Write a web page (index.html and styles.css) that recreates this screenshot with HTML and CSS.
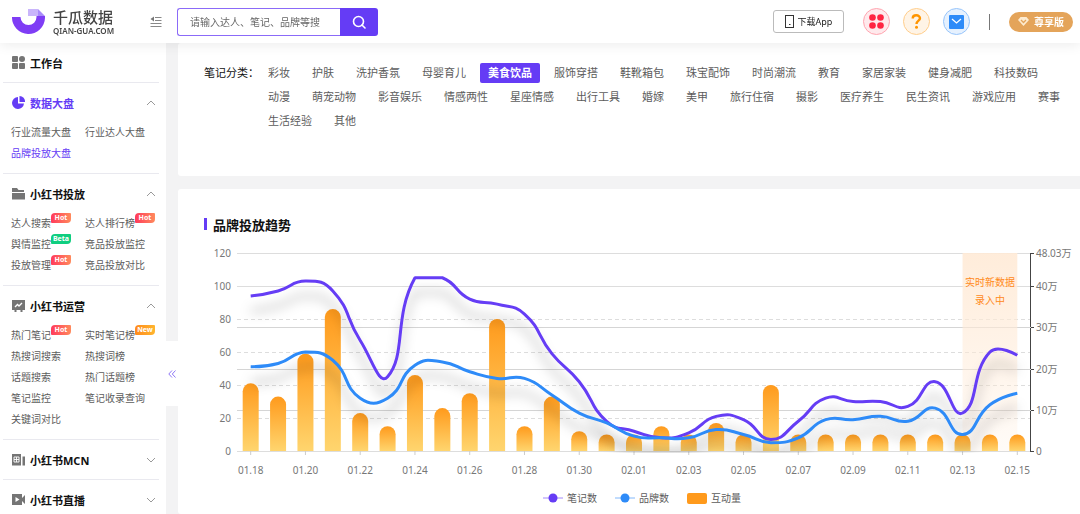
FILE: index.html
```html
<!DOCTYPE html>
<html lang="zh-CN">
<head>
    <meta charset="UTF-8">
    <meta name="viewport" content="width=device-width, initial-scale=1.0">
    <title>千瓜数据</title>
    <link rel="stylesheet" href="styles.css">
</head>
<body>
    <header class="topbar">
        <a class="logo" href="#">
            <svg width="33" height="26" viewBox="0 0 33 26">
                <path fill="#7f3df5" d="M0 8h8.500a8 8 0 0 0 16 0V7H33v2a16.500 16.500 0 0 1-33-1z"/>
                <path fill="#c9b5fb" d="M16 0h10v7H16z"/>
                <path fill="#a98bfa" d="M26 0l7 7h-7z"/>
            </svg>
            <span class="logo-text">
                <span class="logo-name">千瓜数据</span>
                <span class="logo-domain">QIAN-GUA.COM</span>
            </span>
        </a>
        <button class="fold-button" aria-label="收起菜单">
            <svg width="12" height="12" viewBox="0 0 12 12" fill="none" stroke="#888">
                <path d="M5 1.500h6.500M5 4.500h6.500M.5 7.500h11M.5 10.500h11"/>
                <path d="M4 .5v5L.5 3z" fill="#777" stroke="none"/>
            </svg>
        </button>
        <form class="search">
            <input type="text" placeholder="请输入达人、笔记、品牌等搜" aria-label="搜索">
            <button type="button" aria-label="搜索">
                <svg width="14" height="14" viewBox="0 0 14 14" fill="none" stroke="#fff" stroke-width="1.600">
                    <circle cx="6.500" cy="6.500" r="5"/>
                    <path d="M10 10l3 3" stroke-linecap="round"/>
                </svg>
            </button>
        </form>
        <div class="tools">
            <button class="app-button">
                <svg width="9" height="13" viewBox="0 0 9 13" fill="none" stroke="#333">
                    <rect x=".5" y=".5" width="8" height="12"/>
                    <path d="M4 9.500h1.500"/>
                </svg>
                下载App
            </button>
            <button class="round-button red" aria-label="应用">
                <svg width="15" height="15" viewBox="0 0 15 15" fill="#ff2442">
                    <circle cx="3.500" cy="3.500" r="3.300"/>
                    <circle cx="11.500" cy="3.500" r="3.300"/>
                    <circle cx="3.500" cy="11.500" r="3.300"/>
                    <circle cx="11.500" cy="11.500" r="3.300"/>
                </svg>
            </button>
            <button class="round-button orange" aria-label="帮助">
                <svg width="11" height="15" viewBox="0 0 11 15" fill="none" stroke="#ff9500" stroke-width="2.400">
                    <path d="M1.700 4.500C1.700 2.500 3.300 1.300 5.300 1.300S9 2.500 9 4.300C9 6.700 5.500 6.600 5.500 10"/>
                    <circle cx="5.500" cy="13.300" r="1.500" fill="#ff9500" stroke="none"/>
                </svg>
            </button>
            <button class="round-button blue" aria-label="消息">
                <svg width="15" height="14" viewBox="0 0 15 14">
                    <rect width="15" height="14" rx="1" fill="#2e8bf8"/>
                    <path d="M3 4l4.500 4L12 4" fill="none" stroke="#fff" stroke-width="1.300"/>
                </svg>
            </button>
            <span class="separator"></span>
            <button class="vip-button">
                <svg width="11" height="9" viewBox="0 0 11 9">
                    <path d="M2.500 0h6L11 3 5.500 9 0 3z" fill="#fdebd0"/>
                    <path d="M3 3l2.500 2.500L8 3" fill="none" stroke="#e4a45a" stroke-width="1.300"/>
                </svg>
                尊享版
            </button>
        </div>
    </header>

    <div class="page">
        <nav class="sidebar">
            <section>
                <button class="menu-title">
                    <svg width="13" height="13" viewBox="0 0 13 13" fill="#757575">
                        <rect y="0" width="6" height="6" rx="1"/>
                        <circle cx="10" cy="3" r="3"/>
                        <rect y="7" width="6" height="6" rx="1"/>
                        <rect x="7" y="7" width="6" height="6" rx="1"/>
                    </svg>
                    工作台
                </button>
            </section>
            <section>
                <button class="menu-title active">
                    <svg width="13" height="13" viewBox="0 0 13 13" fill="#653cf5">
                        <path d="M6 1v6.500h6A6 6 0 1 1 6 1z"/>
                        <path d="M7.500 0A5.500 5.500 0 0 1 13 6H7.500z"/>
                    </svg>
                    数据大盘
                    <svg class="arrow" width="10" height="6" viewBox="0 0 10 6"><path d="M1 5l4-4 4 4"/></svg>
                </button>
                <div class="menu-links">
                    <a href="#">行业流量大盘</a>
                    <a href="#">行业达人大盘</a>
                    <a href="#" class="active">品牌投放大盘</a>
                </div>
            </section>
            <section>
                <button class="menu-title">
                    <svg width="13" height="13" viewBox="0 0 13 13" fill="#757575">
                        <path d="M0 1h5l1.500 2H12v2H0zM0 6h13v6.500H0z"/>
                    </svg>
                    小红书投放
                    <svg class="arrow" width="10" height="6" viewBox="0 0 10 6"><path d="M1 5l4-4 4 4"/></svg>
                </button>
                <div class="menu-links">
                    <a href="#">达人搜索<span class="badge">Hot</span></a>
                    <a href="#">达人排行榜<span class="badge">Hot</span></a>
                    <a href="#">舆情监控<span class="badge beta">Beta</span></a>
                    <a href="#">竞品投放监控</a>
                    <a href="#">投放管理<span class="badge">Hot</span></a>
                    <a href="#">竞品投放对比</a>
                </div>
            </section>
            <section>
                <button class="menu-title">
                    <svg width="13" height="13" viewBox="0 0 13 13" fill="#757575">
                        <path d="M0 1h13v10H0zM2.500 11h2v2h-2zM8.500 11h2v2h-2z"/>
                        <path d="M3 8l2.500-2.500L7 7l3-3" fill="none" stroke="#fff" stroke-width="1.300"/>
                    </svg>
                    小红书运营
                    <svg class="arrow" width="10" height="6" viewBox="0 0 10 6"><path d="M1 5l4-4 4 4"/></svg>
                </button>
                <div class="menu-links">
                    <a href="#">热门笔记<span class="badge">Hot</span></a>
                    <a href="#">实时笔记榜<span class="badge new">New</span></a>
                    <a href="#">热搜词搜索</a>
                    <a href="#">热搜词榜</a>
                    <a href="#">话题搜索</a>
                    <a href="#">热门话题榜</a>
                    <a href="#">笔记监控</a>
                    <a href="#">笔记收录查询</a>
                    <a href="#">关键词对比</a>
                </div>
            </section>
            <section>
                <button class="menu-title">
                    <svg width="13" height="13" viewBox="0 0 13 13" fill="#757575">
                        <path d="M0 1h9v11.500H0zM10.500 3.500H13v9h-2.500z"/>
                        <path d="M2 4h5v5H2zM2 6.500h5M4.500 4v5" stroke="#fff" fill="none" stroke-width=".9"/>
                    </svg>
                    小红书MCN
                    <svg class="arrow" width="10" height="6" viewBox="0 0 10 6"><path d="M1 1l4 4 4-4"/></svg>
                </button>
            </section>
            <section>
                <button class="menu-title">
                    <svg width="13" height="13" viewBox="0 0 13 13" fill="#757575">
                        <path d="M0 1h10v11H0zM10 5l3-3v9l-3-3z"/>
                        <path d="M3.500 4l4 2.500-4 2.500z" fill="#fff"/>
                    </svg>
                    小红书直播
                    <svg class="arrow" width="10" height="6" viewBox="0 0 10 6"><path d="M1 1l4 4 4-4"/></svg>
                </button>
            </section>
        </nav>

        <main class="content">
            <button class="collapse-tab" aria-label="收起侧栏">
                <svg width="8" height="8" viewBox="0 0 8 8" fill="none" stroke="#8f78f5"><path d="M4 .5L.8 4 4 7.500M7.500 .5L4.300 4l3.200 3.500"/></svg>
            </button>
            <div class="card filter">
                <span class="filter-label">笔记分类：</span>
                <div class="filter-options">
                    <button>彩妆</button>
                    <button>护肤</button>
                    <button>洗护香氛</button>
                    <button>母婴育儿</button>
                    <button class="selected">美食饮品</button>
                    <button>服饰穿搭</button>
                    <button>鞋靴箱包</button>
                    <button>珠宝配饰</button>
                    <button>时尚潮流</button>
                    <button>教育</button>
                    <button>家居家装</button>
                    <button>健身减肥</button>
                    <button>科技数码</button>
                    <button>动漫</button>
                    <button>萌宠动物</button>
                    <button>影音娱乐</button>
                    <button>情感两性</button>
                    <button>星座情感</button>
                    <button>出行工具</button>
                    <button>婚嫁</button>
                    <button>美甲</button>
                    <button>旅行住宿</button>
                    <button>摄影</button>
                    <button>医疗养生</button>
                    <button>民生资讯</button>
                    <button>游戏应用</button>
                    <button>赛事</button>
                    <button>生活经验</button>
                    <button>其他</button>
                </div>
            </div>
            <div class="card trend">
                <h2>品牌投放趋势</h2>
                <svg id="trendChart" class="chart"></svg>
                <ul class="legend">
                    <li><svg width="20" height="10"><path d="M0 5h20" stroke="#653cf5" stroke-opacity=".6"/><circle cx="10" cy="5" r="4.500" fill="#653cf5"/></svg>笔记数</li>
                    <li><svg width="20" height="10"><path d="M0 5h20" stroke="#2e8bf8" stroke-opacity=".6"/><circle cx="10" cy="5" r="4.500" fill="#2e8bf8"/></svg>品牌数</li>
                    <li><svg width="20" height="11"><rect width="20" height="11" rx="2" fill="#ff9a1c"/></svg>互动量</li>
                </ul>
            </div>
        </main>
    </div>
    <script src="chart.js"></script>
</body>
</html>
```
FILE: styles.css
```css
:root {
    --purple: #653cf5;
    --line: #e9e9ef;
}
* {
    box-sizing: border-box;
}
body {
    margin: 0;
    height: 100vh;
    display: flex;
    flex-direction: column;
    overflow: hidden;
    font-family: "Noto Sans", "Noto Sans CJK SC", sans-serif;
    font-size: 10px;
    color: #5c5c5c;
    background-color: #f3f3f4;
}
button {
    padding: 0;
    border: none;
    background: none;
    font: inherit;
    color: inherit;
    cursor: pointer;
}
a {
    color: inherit;
    text-decoration: none;
}
svg {
    flex-shrink: 0;
}

/* top bar */
.topbar {
    position: relative;
    z-index: 2;
    height: 43px;
    flex-shrink: 0;
    display: flex;
    align-items: center;
    padding: 0 7px 0 12px;
    background-color: #fff;
    box-shadow: 0 2px 12px rgba(0, 0, 0, 0.08);
}
.logo {
    display: flex;
    align-items: center;
    gap: 8px;
    width: 138px;
    color: #444;
}
.logo-text {
    display: flex;
    flex-direction: column;
}
.logo-name {
    font-size: 15px;
    font-weight: 500;
    line-height: 17px;
}
.logo-domain {
    font-size: 8px;
    font-weight: 600;
    line-height: 9px;
}
.fold-button {
    display: flex;
}
.search {
    display: flex;
    width: 201px;
    height: 28px;
    margin-left: 15px;
}
.search input {
    flex: 1;
    min-width: 0;
    padding: 0 12px;
    border: 1px solid #8b6af8;
    border-right: none;
    border-radius: 3px 0 0 3px;
    font: inherit;
    outline: none;
}
.search input::placeholder {
    color: #666;
}
.search button {
    width: 38px;
    display: flex;
    align-items: center;
    justify-content: center;
    border-radius: 0 3px 3px 0;
    background-color: var(--purple);
}
.tools {
    display: flex;
    align-items: center;
    gap: 13px;
    margin-left: auto;
}
.app-button {
    display: flex;
    align-items: center;
    justify-content: center;
    gap: 4px;
    width: 71px;
    height: 23px;
    margin-right: 6px;
    border: 1px solid #bbb;
    border-radius: 3px;
    font-size: 9px;
    color: #222;
}
.round-button {
    width: 27px;
    height: 27px;
    display: flex;
    align-items: center;
    justify-content: center;
    border: 1px solid;
    border-radius: 50%;
}
.round-button.red {
    background-color: #ffe9ec;
    border-color: #ffa5b0;
}
.round-button.orange {
    background-color: #fff4e6;
    border-color: #ffce8c;
}
.round-button.blue {
    background-color: #e6f1fe;
    border-color: #97c5fb;
}
.separator {
    width: 1px;
    height: 16px;
    margin: 0 6px;
    background-color: #777;
}
.vip-button {
    display: flex;
    align-items: center;
    justify-content: center;
    gap: 5px;
    width: 64px;
    height: 20px;
    border-radius: 10px;
    background-color: #e4a45a;
    font-weight: 700;
    color: #fff;
}

.page {
    flex: 1;
    min-height: 0;
    display: flex;
}

/* left menu */
.sidebar {
    width: 166px;
    flex-shrink: 0;
    overflow-y: auto;
    scrollbar-width: none;
    padding: 0 7px 0 3px;
    background-color: #fff;
}
.sidebar section {
    border-bottom: 1px solid var(--line);
}
.menu-title {
    width: 100%;
    height: 39px;
    display: flex;
    align-items: center;
    gap: 5px;
    padding: 0 3px 0 9px;
    font-size: 11px;
    font-weight: 700;
    color: #111;
}
.menu-title.active,
.menu-links .active {
    color: var(--purple);
}
.arrow {
    margin-left: auto;
    fill: none;
    stroke: #999;
}
.menu-links {
    display: grid;
    grid-template-columns: 74px 1fr;
    grid-auto-rows: 21px;
    padding: 0 0 9px 8px;
}
.menu-links a {
    position: relative;
    justify-self: start;
    line-height: 21px;
    white-space: nowrap;
}
.badge {
    position: absolute;
    left: 100%;
    top: 0;
    width: 20px;
    height: 10px;
    border-radius: 4px 1px 4px 1px;
    background: linear-gradient(90deg, #ff3b5c, #ff8a5c);
    font-size: 7px;
    font-weight: 700;
    line-height: 10px;
    text-align: center;
    color: #fff;
}
.badge.beta {
    background: #0fce80;
}
.badge.new {
    background: linear-gradient(90deg, #ff8a1c, #ffb52e);
}

/* main area */
.content {
    position: relative;
    flex: 1;
    min-width: 0;
    display: flex;
    flex-direction: column;
    gap: 13px;
    padding-left: 12px;
}
.collapse-tab {
    position: absolute;
    left: 0;
    top: 298px;
    width: 12px;
    height: 65px;
    display: flex;
    align-items: center;
    justify-content: center;
    background-color: #fff;
}
.card {
    background-color: #fff;
    border-radius: 3px 0 0 3px;
}
.filter {
    display: flex;
    min-height: 133px;
    padding: 18px 10px 42px 26px;
    font-size: 11px;
    line-height: 24px;
}
.filter-label {
    width: 56px;
    flex-shrink: 0;
    color: #111;
}
.filter-options {
    display: flex;
    flex-wrap: wrap;
    align-content: flex-start;
    gap: 4px 6px;
    padding-top: 2px;
}
.filter-options button {
    height: 20px;
    padding: 0 8px;
    border-radius: 2px;
    line-height: 20px;
}
.filter-options .selected {
    background-color: var(--purple);
    font-weight: 700;
    color: #fff;
}
.trend {
    flex: 1;
    padding: 24px 0 0 26px;
}
.trend h2 {
    display: flex;
    align-items: center;
    gap: 6px;
    margin: 0;
    height: 22px;
    font-size: 13px;
    font-weight: 700;
    color: #111;
}
.trend h2::before {
    content: "";
    width: 3px;
    height: 12px;
    background-color: var(--purple);
}
.chart {
    display: block;
    width: 100%;
    height: 246px;
    margin-top: 5px;
    font-size: 10px;
    fill: #777;
}
.legend {
    display: flex;
    justify-content: center;
    gap: 18px;
    margin: 0;
    padding: 0;
    list-style: none;
    line-height: 24px;
}
.legend li {
    display: flex;
    align-items: center;
    gap: 4px;
}
```
FILE: chart.js
```js
const notes = [94, 97, 103, 97, 67, 45, 105, 105, 92, 89, 83, 59, 42, 18, 12, 8, 11, 21, 19, 7, 18, 32, 30, 30, 27, 42, 23, 60, 58];
const brands = [51, 53, 60, 55, 32, 32, 52, 54, 48, 44, 44, 34, 23, 17, 9, 8, 8, 13, 10, 5, 8, 19, 19, 21, 18, 26, 10, 28, 35];
const bars = [41, 33, 59, 86, 23, 15, 46, 26, 35, 80, 15, 33, 12, 10, 10, 15, 10, 17, 10, 40, 10, 10, 10, 10, 10, 10, 10, 10, 10];
const days = ['01.18', '01.20', '01.22', '01.24', '01.26', '01.28', '01.30', '02.01', '02.03', '02.05', '02.07', '02.09', '02.11', '02.13', '02.15'];

const svg = document.getElementById('trendChart');
const left = 33;
const plotTop = 13;
const bottom = 211;

function yOf(value) {
    return bottom - value * (bottom - plotTop) / 120;
}

// smooth bezier through all points, control points kept inside the data range
function smoothPath(points) {
    const ys = points.map(p => p[1]);
    const min = Math.min(...ys);
    const max = Math.max(...ys);
    const clamp = y => Math.max(min, Math.min(max, y));
    let d = `M${points[0]}`;
    let cp0 = points[0];
    for (let i = 1; i < points.length; i++) {
        const prev = points[i - 1];
        const p = points[i];
        const next = points[i + 1];
        let cp1 = p;
        let out = p;
        if (next) {
            const lenPrev = Math.hypot(p[0] - prev[0], p[1] - prev[1]);
            const lenNext = Math.hypot(p[0] - next[0], p[1] - next[1]);
            const ratio = lenNext / (lenPrev + lenNext);
            const vx = next[0] - prev[0];
            const vy = next[1] - prev[1];
            cp1 = [p[0] - vx * 0.5 * (1 - ratio), clamp(p[1] - vy * 0.5 * (1 - ratio))];
            out = [p[0] + vx * 0.5 * ratio, clamp(p[1] + vy * 0.5 * ratio)];
        }
        d += `C${cp0} ${cp1} ${p}`;
        cp0 = out;
    }
    return d;
}

function draw() {
    const right = svg.clientWidth - 49;
    const step = (right - left) / notes.length;
    const xOf = i => left + step * (i + 0.5);
    let html = `<defs>
        <linearGradient id="barFill" x2="0" y2="1"><stop stop-color="#ff9a1c"/><stop offset="1" stop-color="#ffd56e"/></linearGradient>
        <linearGradient id="areaFill" x2="0" y2="1"><stop stop-color="#ffead6"/><stop offset="1" stop-color="#ffead6" stop-opacity=".2"/></linearGradient>
        <filter id="lineShadow" filterUnits="userSpaceOnUse" x="0" y="0" width="${right + 10}" height="${bottom + 2}">
            <feDropShadow dx="0" dy="15" stdDeviation="6" flood-color="#000" flood-opacity=".3"/>
        </filter>
    </defs>`;

    // left axis
    for (let v = 0; v <= 120; v += 20) {
        const y = Math.round(yOf(v)) + 0.5;
        const dash = v > 0 && v < 100 ? 'stroke-dasharray="4 3"' : '';
        html += `<path d="M${left} ${y}H${right}" stroke="#ddd" ${dash}/>`;
        html += `<text x="${left - 6}" y="${y + 3}" text-anchor="end">${v}</text>`;
    }
    // right axis
    html += `<path d="M${right - 0.5} ${plotTop}V${bottom + 1}" stroke="#444"/>`;
    [[0, '0'], [10, '10万'], [20, '20万'], [30, '30万'], [40, '40万'], [48.03, '48.03万']].forEach(([v, label]) => {
        const y = Math.round(yOf(v / 48.03 * 120)) + 0.5;
        if (v > 0 && v < 40) {
            html += `<path d="M${left} ${y}H${right}" stroke="#d5d5d5"/>`;
        }
        html += `<path d="M${right} ${y}h3" stroke="#444"/>`;
        html += `<text x="${right + 5}" y="${y + 3}">${label}</text>`;
    });
    // dates
    days.forEach((day, i) => {
        const x = xOf(i * 2);
        html += `<path d="M${x} ${bottom}v4" stroke="#ccc"/>`;
        html += `<text x="${x}" y="234" text-anchor="middle">${day}</text>`;
    });

    // today's data still coming in
    const mid = xOf(27);
    html += `<rect x="${xOf(26)}" y="${plotTop}" width="${step * 2}" height="${bottom - plotTop}" fill="url(#areaFill)" opacity=".9"/>`;
    html += `<text x="${mid}" y="46" text-anchor="middle" fill="#ff8a1c">实时新数据</text>`;
    html += `<text x="${mid}" y="64" text-anchor="middle" fill="#ff8a1c">录入中</text>`;

    bars.forEach((v, i) => {
        const x = xOf(i) - 8;
        html += `<path d="M${x} ${bottom}V${yOf(v) + 8}a8 8 0 0 1 16 0V${bottom}z" fill="url(#barFill)"/>`;
    });
    [[notes, '#653cf5'], [brands, '#2e8bf8']].forEach(([data, color]) => {
        const d = smoothPath(data.map((v, i) => [xOf(i), yOf(v)]));
        html += `<path d="${d}" fill="none" stroke="${color}" stroke-width="3" stroke-linejoin="bevel" filter="url(#lineShadow)"/>`;
    });
    svg.innerHTML = html;
}

draw();
window.addEventListener('resize', draw);
```
